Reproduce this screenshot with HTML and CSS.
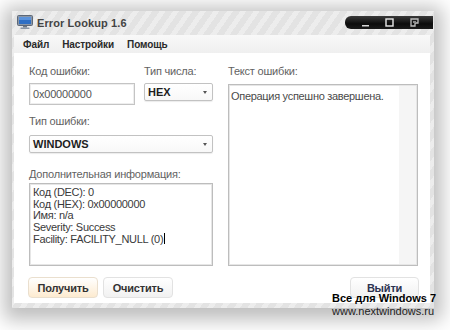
FILE: index.html
```html
<!DOCTYPE html>
<html lang="ru">
<head>
    <meta charset="UTF-8">
    <meta name="viewport" content="width=device-width, initial-scale=1.0">
    <title>Error Lookup 1.6</title>
    <link rel="stylesheet" href="styles.css">
</head>
<body>
    <div class="window">
        <div class="titlebar">
            <svg class="app-icon" width="16" height="14" viewBox="0 0 16 14">
                <rect x="0.5" y="0.5" width="15" height="10" rx="1" fill="#8a96a6" stroke="#5d6878"/>
                <rect x="2" y="2" width="12" height="7" fill="#2f6fc4"/>
                <rect x="2" y="2" width="12" height="3" fill="#5b93dc"/>
                <rect x="6" y="11" width="4" height="1.5" fill="#6c7684"/>
                <rect x="3.5" y="12.5" width="9" height="1.5" rx="0.5" fill="#8a96a6"/>
            </svg>
            <span class="title">Error Lookup 1.6</span>
            <div class="caption-buttons">
                <svg width="9" height="9" viewBox="0 0 9 9"><rect x="1" y="7" width="7" height="1.5" fill="#d8d8d8"/></svg>
                <svg width="9" height="9" viewBox="0 0 9 9"><rect x="1" y="1" width="7" height="7" fill="none" stroke="#e8e8e8" stroke-width="1.4"/></svg>
                <svg width="9" height="9" viewBox="0 0 9 9"><path d="M1 1h7v4H5v3H1z" fill="none" stroke="#bdbdbd" stroke-width="1.3"/><rect x="3" y="3" width="3" height="2" fill="#888"/></svg>
            </div>
        </div>

        <div class="client">
            <div class="menubar">
                <span class="menu-item">Файл</span>
                <span class="menu-item">Настройки</span>
                <span class="menu-item">Помощь</span>
            </div>

            <div class="content">
                <div class="left-col">
                    <div class="row">
                        <div class="field code-field">
                            <label class="caption">Код ошибки:</label>
                            <div class="edit">0x00000000</div>
                        </div>
                        <div class="field num-field">
                            <label class="caption">Тип числа:</label>
                            <div class="combo">HEX<span class="arrow"></span></div>
                        </div>
                    </div>
                    <div class="field type-field">
                        <label class="caption">Тип ошибки:</label>
                        <div class="combo wide">WINDOWS<span class="arrow"></span></div>
                    </div>
                    <div class="field info-field">
                        <label class="caption">Дополнительная информация:</label>
                        <div class="memo info">
                            <div>Код (DEC): 0</div>
                            <div>Код (HEX): 0x00000000</div>
                            <div>Имя: n/a</div>
                            <div>Severity: Success</div>
                            <div>Facility: FACILITY_NULL (0)<span class="caret"></span></div>
                        </div>
                    </div>
                </div>

                <div class="right-col">
                    <label class="caption">Текст ошибки:</label>
                    <div class="memo message">
                        <div class="message-text">Операция успешно завершена.</div>
                        <div class="scroll-strip"></div>
                    </div>
                </div>
            </div>

            <div class="buttons">
                <button class="btn primary">Получить</button>
                <button class="btn">Очистить</button>
                <button class="btn exit">Выйти</button>
            </div>
        </div>
    </div>

    <div class="watermark">
        <div class="wm-title">Все для Windows 7</div>
        <div class="wm-url">www.nextwindows.ru</div>
    </div>
</body>
</html>
```

FILE: styles.css
```css
body {
    margin: 0;
    width: 450px;
    height: 330px;
    overflow: hidden;
    background-color: #ffffff;
    font-family: 'Liberation Sans', Arial, sans-serif;
    position: relative;
}
.window {
    margin: 11px 0 0 12px;
    width: 422px;
    height: 297px;
    box-sizing: border-box;
    padding: 0 4px 5px 2px;
    background-color: #e3e3e3;
    background-image: repeating-linear-gradient(125deg, rgba(255, 255, 255, 0.35) 0 5px, rgba(255, 255, 255, 0) 5px 11px);
    box-shadow: 0 4px 18px 8px rgba(0, 0, 0, 0.26);
    display: flex;
    flex-direction: column;
}
.titlebar {
    height: 24px;
    display: flex;
    align-items: center;
    margin-left: -2px;
    margin-right: -4px;
    padding-left: 5px;
}
.app-icon {
    display: block;
    margin-top: -2px;
}
.title {
    margin-left: 4px;
    font-size: 11px;
    font-weight: bold;
    color: #444444;
    letter-spacing: 0.1px;
}
.caption-buttons {
    margin-left: auto;
    margin-right: 1px;
    margin-top: -1px;
    width: 88px;
    height: 13px;
    box-sizing: border-box;
    border-radius: 6px 0 0 6px;
    background: linear-gradient(#3a3a3a, #0c0c0c 60%, #1a1a1a);
    display: flex;
    align-items: center;
    justify-content: space-around;
    padding: 0 6px 0 8px;
}
.caption-buttons svg {
    display: block;
}
.client {
    flex: 1;
    background-color: #ffffff;
    display: flex;
    flex-direction: column;
}
.menubar {
    height: 18px;
    background: linear-gradient(#f8f8f8, #efefef);
    display: flex;
    align-items: center;
    padding-left: 9px;
    gap: 13px;
}
.menu-item {
    font-size: 10px;
    font-weight: bold;
    color: #2a2a2a;
    letter-spacing: -0.1px;
}
.content {
    display: flex;
    padding: 12px 11px 0 15px;
    gap: 15px;
}
.left-col {
    width: 184px;
    display: flex;
    flex-direction: column;
}
.right-col {
    width: 190px;
    display: flex;
    flex-direction: column;
}
.row {
    display: flex;
    gap: 9px;
}
.caption {
    display: block;
    font-size: 11px;
    line-height: 13px;
    color: #626262;
    letter-spacing: -0.2px;
}
.code-field .caption,
.num-field .caption {
    margin-bottom: 5px;
}
.code-field {
    width: 106px;
}
.num-field {
    width: 69px;
}
.edit {
    height: 22px;
    box-sizing: border-box;
    border: 1px solid #c4c4c4;
    box-shadow: inset 0 0 0 1px #eeeeee;
    padding: 3px 3px;
    font-size: 11px;
    line-height: 14px;
    color: #555555;
    letter-spacing: -0.2px;
}
.combo {
    position: relative;
    height: 18px;
    box-sizing: border-box;
    margin-top: 3px;
    border: 1px solid #c2c2c2;
    border-radius: 2px;
    background: linear-gradient(#ffffff, #f8f8f8);
    box-shadow: 0 1px 1px rgba(0, 0, 0, 0.08);
    padding: 0 3px;
    font-size: 11px;
    font-weight: bold;
    line-height: 16px;
    color: #1e1e1e;
}
.combo.wide {
    margin-top: 0;
}
.arrow {
    position: absolute;
    right: 5px;
    top: 7px;
    width: 0;
    height: 0;
    border-left: 2.5px solid transparent;
    border-right: 2.5px solid transparent;
    border-top: 3px solid #555555;
}
.type-field {
    margin-top: 10px;
}
.type-field .caption {
    margin-bottom: 7px;
}
.info-field {
    margin-top: 15px;
}
.info-field .caption {
    margin-bottom: 2px;
}
.memo {
    box-sizing: border-box;
    border: 1px solid #bdbdbd;
    box-shadow: inset 0 0 0 1px #e6e6e6;
    font-size: 11px;
    color: #3a3a3a;
    letter-spacing: -0.3px;
}
.memo.info {
    height: 83px;
    padding: 3px 3px;
    line-height: 11.6px;
}
.caret {
    display: inline-block;
    width: 1px;
    height: 11px;
    margin-left: 1px;
    vertical-align: -1px;
    background-color: #000000;
}
.right-col .caption {
    margin-bottom: 6px;
}
.memo.message {
    height: 182px;
    display: flex;
}
.message-text {
    flex: 1;
    padding: 5px 2px;
    line-height: 13px;
    color: #4a4a4a;
}
.scroll-strip {
    width: 17px;
    margin: 1px 1px 1px 0;
    background-color: #f5f5f5;
}
.buttons {
    display: flex;
    gap: 5px;
    padding: 11px 11px 0 14px;
}
.btn {
    width: 70px;
    height: 21px;
    border: 1px solid #e2e2e2;
    border-radius: 4px;
    background: linear-gradient(#ffffff, #f1f1f1);
    font-family: 'Liberation Sans', Arial, sans-serif;
    font-size: 11px;
    font-weight: bold;
    color: #333333;
    padding: 0;
    letter-spacing: -0.2px;
}
.btn.primary {
    background: linear-gradient(#ffffff, #fdebd0);
    border-color: #eadfce;
}
.btn.exit {
    margin-left: auto;
    width: 69px;
    color: #2c3350;
}
.watermark {
    position: absolute;
    left: 332px;
    top: 292px;
    line-height: 13px;
}
.wm-title {
    font-size: 11px;
    font-weight: bold;
    color: #000000;
}
.wm-url {
    font-size: 11px;
    color: #222222;
}
```
